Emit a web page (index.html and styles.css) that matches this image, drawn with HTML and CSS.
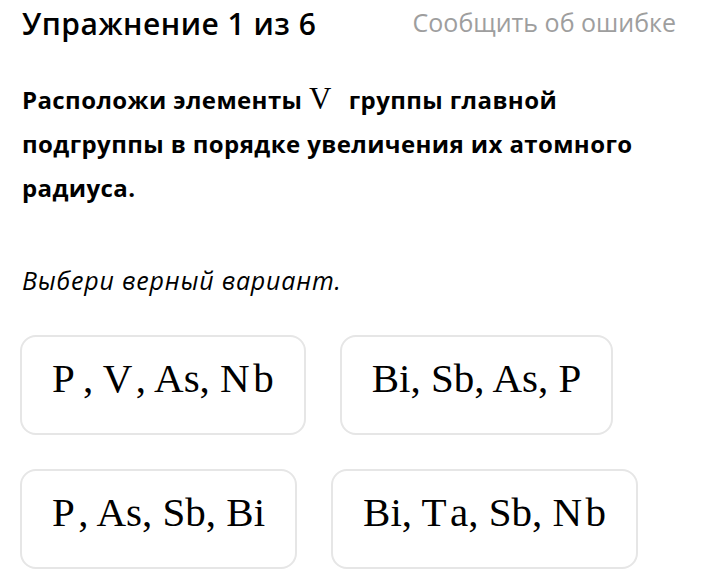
FILE: index.html
```html
<!DOCTYPE html>
<html lang="ru">
<head>
<meta charset="utf-8">
<title>Упражнение 1 из 6</title>
<link rel="stylesheet" href="styles.css">
</head>
<body>
<div class="page">
  <header class="top">
    <h1 class="title">Упражнение 1 из 6</h1>
    <a class="report">Сообщить об ошибке</a>
  </header>
  <p class="question">Расположи элементы <span class="math-inline">V</span>&nbsp;&nbsp;группы главной подгруппы в порядке увеличения их атомного радиуса.</p>
  <p class="hint">Выбери верный вариант.</p>
  <div class="options">
    <div class="option"><span class="math">P&#8201;, V&#8202;, As, N&#8202;b</span></div>
    <div class="option"><span class="math">Bi, Sb, As, P</span></div>
    <div class="option"><span class="math">P&#8202;, As, Sb, Bi</span></div>
    <div class="option"><span class="math">Bi, T&#8202;a, Sb, N&#8202;b</span></div>
  </div>
</div>
</body>
</html>
```

FILE: styles.css
```css
html, body {
  margin: 0;
  padding: 0;
  background: #ffffff;
}
.page {
  padding: 6px 40px 0 22px;
  font-family: "Open Sans", "Noto Sans", sans-serif;
  color: #000;
}
.top {
  display: flex;
  justify-content: space-between;
  align-items: flex-start;
}
.title {
  margin: 0;
  font-size: 30px;
  font-weight: 600;
  line-height: 36px;
  letter-spacing: 0.5px;
}
.report {
  font-size: 25px;
  line-height: 32px;
  color: #9e9e9e;
  font-weight: 400;
}
.question {
  margin: 36px 0 0 0;
  font-size: 24px;
  font-weight: 700;
  line-height: 44px;
  letter-spacing: 0.4px;
}
.math-inline {
  font-family: "Liberation Serif", serif;
  font-weight: 400;
  font-size: 31px;
  line-height: 1;
  letter-spacing: 0;
  margin-right: 4px;
}
.hint {
  margin: 55px 0 0 0;
  font-size: 25px;
  font-style: italic;
  line-height: 30px;
  letter-spacing: 0.8px;
}
.options {
  display: flex;
  flex-wrap: wrap;
  gap: 34px;
  margin-top: 40px;
  margin-left: -2px;
}
.option {
  box-sizing: border-box;
  height: 100px;
  padding: 0 30px 14px;
  border: 2px solid #e6e6e6;
  border-radius: 16px;
  display: flex;
  align-items: center;
  justify-content: center;
}
.math {
  font-family: "Liberation Serif", serif;
  font-size: 41px;
}
```
